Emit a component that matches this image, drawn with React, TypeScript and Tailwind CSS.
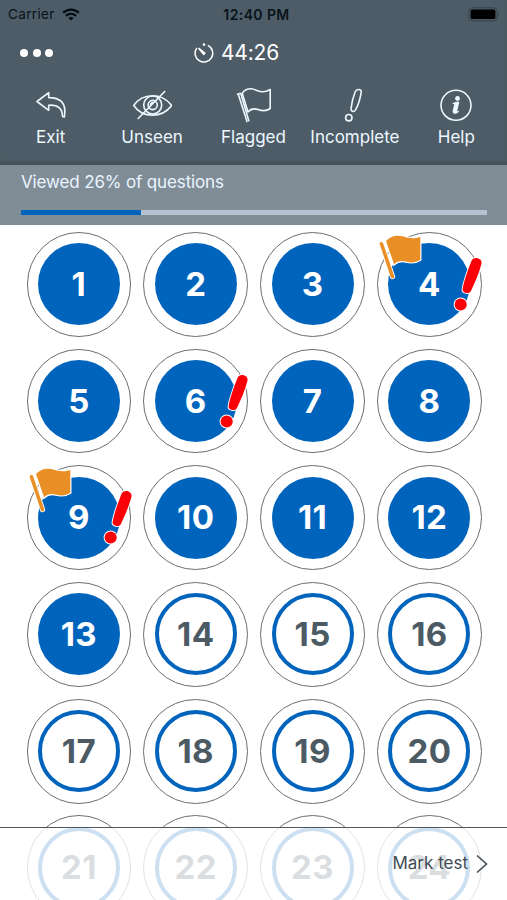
import React from 'react'

const ExitIcon = () => (
  <path d="M1.5 13.5 L13.2 4.6 V9.6 C24 9.6 31.5 14 28.8 29 C27.6 29 27.2 28.8 26.9 28 C27 20.5 22.5 16.6 13.2 17.2 V22.3 Z" />
)

const UnseenIcon = () => (
  <>
    <path d="M1 17.5 C10 4.5 29 4.5 39 17.5 C29 30.5 10 30.5 1 17.5 Z" />
    <circle cx="20" cy="17" r="9" />
    <circle cx="20" cy="17" r="4.6" />
    <path d="M17.8 17.5 A3 3 0 0 1 20.5 14.5" />
    <path d="M32 3.5 L5.5 30.5" />
  </>
)

const FlagIcon = () => (
  <>
    <path d="M4.2 6 L13 33.5" />
    <path d="M6.8 5.5 L14.8 32.7" />
    <path d="M3.6 6.2 L6 5.4" />
    <path d="M8.2 5.2 C13 -1 18.5 .2 23.5 2.8 C28.5 4.7 32 4.2 36.2 1.5 V20.5 C32 23.8 28 23 24 21.5 C19.5 20 16.8 20.5 14 24 Z" />
  </>
)

const IncompleteIcon = () => (
  <>
    <path d="M17.2 3.8 C18.5 .6 23.9 .7 23.2 4.4 C22.3 10 20.4 17.2 17.3 22.4 C16 24.3 12.6 23.4 13 20.8 C13.6 15 15.2 8.8 17.2 3.8 Z" />
    <circle cx="10.8" cy="29.7" r="3.2" />
  </>
)

const HelpIcon = () => (
  <>
    <circle cx="20" cy="17.3" r="15" />
    <circle cx="21.5" cy="10.5" r="2.4" fill="currentColor" stroke="none" />
    <path
      d="M16.6 15.2 C18.8 14 21.5 13.6 23.4 13.8 L21.2 23 C21.5 23.6 22.4 23 23.4 22.2 C22.6 25 19.8 26.2 17.8 25.4 C16.4 24.9 16.5 23.5 16.8 22.3 L18.2 16.6 C18 15.9 17.3 16 16.6 16.3 Z"
      fill="currentColor"
      stroke="none"
    />
  </>
)

const actions = [
  { label: 'Exit', icon: <ExitIcon />, box: '-4.5 0 40 36' },
  { label: 'Unseen', icon: <UnseenIcon />, box: '-.7 0 40 36' },
  { label: 'Flagged', icon: <FlagIcon />, box: '-1 0 40 36' },
  { label: 'Incomplete', icon: <IncompleteIcon />, box: '-3 0 40 36' },
  { label: 'Help', icon: <HelpIcon />, box: '0 0 40 36' },
]

const VIEWED = 13
const flagged = [4, 9]
const incomplete = [4, 6, 9]
const questions = Array.from({ length: 24 }, (_, i) => i + 1)

const FlagBadge = () => (
  <svg className="absolute inset-0 size-full overflow-visible" viewBox="0 0 105 105">
    <path
      d="M8.2 8.2 C13 2.8 19.4 1.6 26 3.6 C32 5.6 37 6 43.2 4 V27.4 C38 30.8 33.5 30.5 28.5 29.2 C23 28 20 28.6 16.4 32 Z"
      fill="#ea8f26"
      stroke="white"
      strokeWidth="2.4"
      paintOrder="stroke"
    />
    <path d="M3.5 11 L14.8 44.5" stroke="white" strokeWidth="5.4" strokeLinecap="round" />
    <path d="M3.5 11 L14.8 44.5" stroke="#ea8f26" strokeWidth="3.6" strokeLinecap="round" />
  </svg>
)

const IncompleteBadge = () => (
  <svg
    className="absolute inset-0 size-full overflow-visible"
    viewBox="0 0 105 105"
    fill="#fb0007"
    stroke="white"
    strokeWidth="2"
    paintOrder="stroke"
  >
    <path d="M95.4 28.6 C97.4 23.2 107.2 25.6 105.6 31.6 C103 41.4 98.8 51 94.8 59.4 C92.8 63 85.6 61.2 86.4 57.2 C88 48 92.2 37 95.4 28.6 Z" />
    <circle cx="84.4" cy="73" r="6.2" />
  </svg>
)

const Question: React.FC<{ number: number }> = ({ number }) => (
  <div className="relative flex aspect-square items-center justify-center rounded-full border border-[#6a6f73]">
    <div
      className={
        number <= VIEWED
          ? 'flex size-[82px] items-center justify-center rounded-full bg-[#0064bd] text-white'
          : 'flex size-[82px] items-center justify-center rounded-full border-4 border-[#0064bd] text-[#4c5a64]'
      }
    >
      <span className="text-[33px] leading-none font-bold tracking-[0.4px]">{number}</span>
    </div>
    {flagged.includes(number) && <FlagBadge />}
    {incomplete.includes(number) && <IncompleteBadge />}
  </div>
)

const App: React.FC = () => {
  return (
    <div className="flex h-[900px] w-[507px] flex-col overflow-hidden bg-white font-['Inter','Liberation_Sans',sans-serif]">
      <header className="flex h-[165px] shrink-0 flex-col bg-[#4d5c66] shadow-[inset_0_-5px_4px_-3px_#3e4c56]">
        <div className="grid h-7 grid-cols-3 items-center pr-[7px] pl-2 text-[13px] text-[#09131b]">
          <div className="flex items-center gap-[7px]">
            <span className="text-[13.5px] tracking-[0.35px]">Carrier</span>
            <svg className="h-[13px] w-[18px]" viewBox="0 0 18 13" fill="none" stroke="#000c14" strokeWidth="2.3">
              <path d="M1.2 4.8 C5.5 .5 12.5 .5 16.8 4.8" />
              <path d="M4 7.9 C7 5.1 11 5.1 14 7.9" />
              <path d="M9 12.6 L6.4 10 Q9 8 11.6 10 Z" fill="#000c14" stroke="none" />
            </svg>
          </div>
          <span className="pl-[5px] text-center text-[14px] font-semibold tracking-[0.4px] whitespace-nowrap">12:40 PM</span>
          <svg className="h-[15px] w-8 justify-self-end" viewBox="0 0 32 15">
            <rect x=".8" y=".8" width="28.4" height="13" rx="3.5" fill="none" stroke="#35424a" />
            <rect x="2.6" y="2.6" width="24.8" height="9.4" rx="1.6" fill="black" />
            <path d="M30.3 5 Q32 7.3 30.3 9.6 Z" fill="#35424a" />
          </svg>
        </div>
        <div className="grid h-12 grid-cols-3 items-center px-5 pt-0.5 text-white">
          <div className="flex gap-[4.5px]">
            <span className="size-2 rounded-full bg-white" />
            <span className="size-2 rounded-full bg-white" />
            <span className="size-2 rounded-full bg-white" />
          </div>
          <div className="-mr-1 flex items-center justify-center gap-[7px] pr-10 pl-0.5">
            <svg className="h-5 w-5 shrink-0" viewBox="0 0 20 20" fill="none" stroke="currentColor" strokeWidth="1.5" strokeLinecap="round">
              <path d="M2.6 5.4 A8.8 8.8 0 1 0 14.4 2.7" />
              <path d="M4.6 5.2 L10.8 10.2 L9.8 11.4 Z" fill="currentColor" />
              <circle cx="10" cy="1.6" r=".6" fill="currentColor" />
            </svg>
            <span className="text-[21px] tracking-[-0.2px]">44:26</span>
          </div>
        </div>
        <nav className="grid grid-cols-5 pt-3 text-[#edf7ff]">
          {actions.map(({ label, icon, box }) => (
            <button key={label} className="flex flex-col items-center gap-0.5">
              <svg
                className="h-9 w-10"
                viewBox={box}
                fill="none"
                stroke="currentColor"
                strokeWidth="1.6"
                strokeLinecap="round"
                strokeLinejoin="round"
              >
                {icon}
              </svg>
              <span className="text-[17px] leading-[22px]">{label}</span>
            </button>
          ))}
        </nav>
      </header>

      <div className="h-[60px] shrink-0 bg-[#808d97] pt-[7px] pr-5 pl-[21px]">
        <p className="text-[17px] leading-5 tracking-[-0.14px] text-[#eaf5ff]">Viewed 26% of questions</p>
        <div className="mt-[18px] h-[5px] bg-[#b4c2d1]">
          <div className="h-full bg-[#0064bd]" style={{ width: '25.8%' }} />
        </div>
      </div>

      <main className="min-h-0 flex-1">
        <div className="grid grid-cols-4 gap-x-3 gap-y-[11.9px] pt-[6.9px] pr-[25.2px] pl-[26.5px]">
          {questions.map((n) => (
            <Question key={n} number={n} />
          ))}
        </div>
      </main>

      <footer className="relative z-10 -mt-[73px] flex h-[73px] shrink-0 items-center justify-end gap-2 border-t border-[#50575c] bg-white/80 pr-[19px] text-[#3f4b55]">
        <span className="text-[17px]">Mark test</span>
        <svg className="h-5 w-3" viewBox="0 0 12 20" fill="none" stroke="currentColor" strokeWidth="1.6">
          <path d="M1 1.5 L10.5 10 L1 18.5" />
        </svg>
      </footer>
    </div>
  )
}

export default App
